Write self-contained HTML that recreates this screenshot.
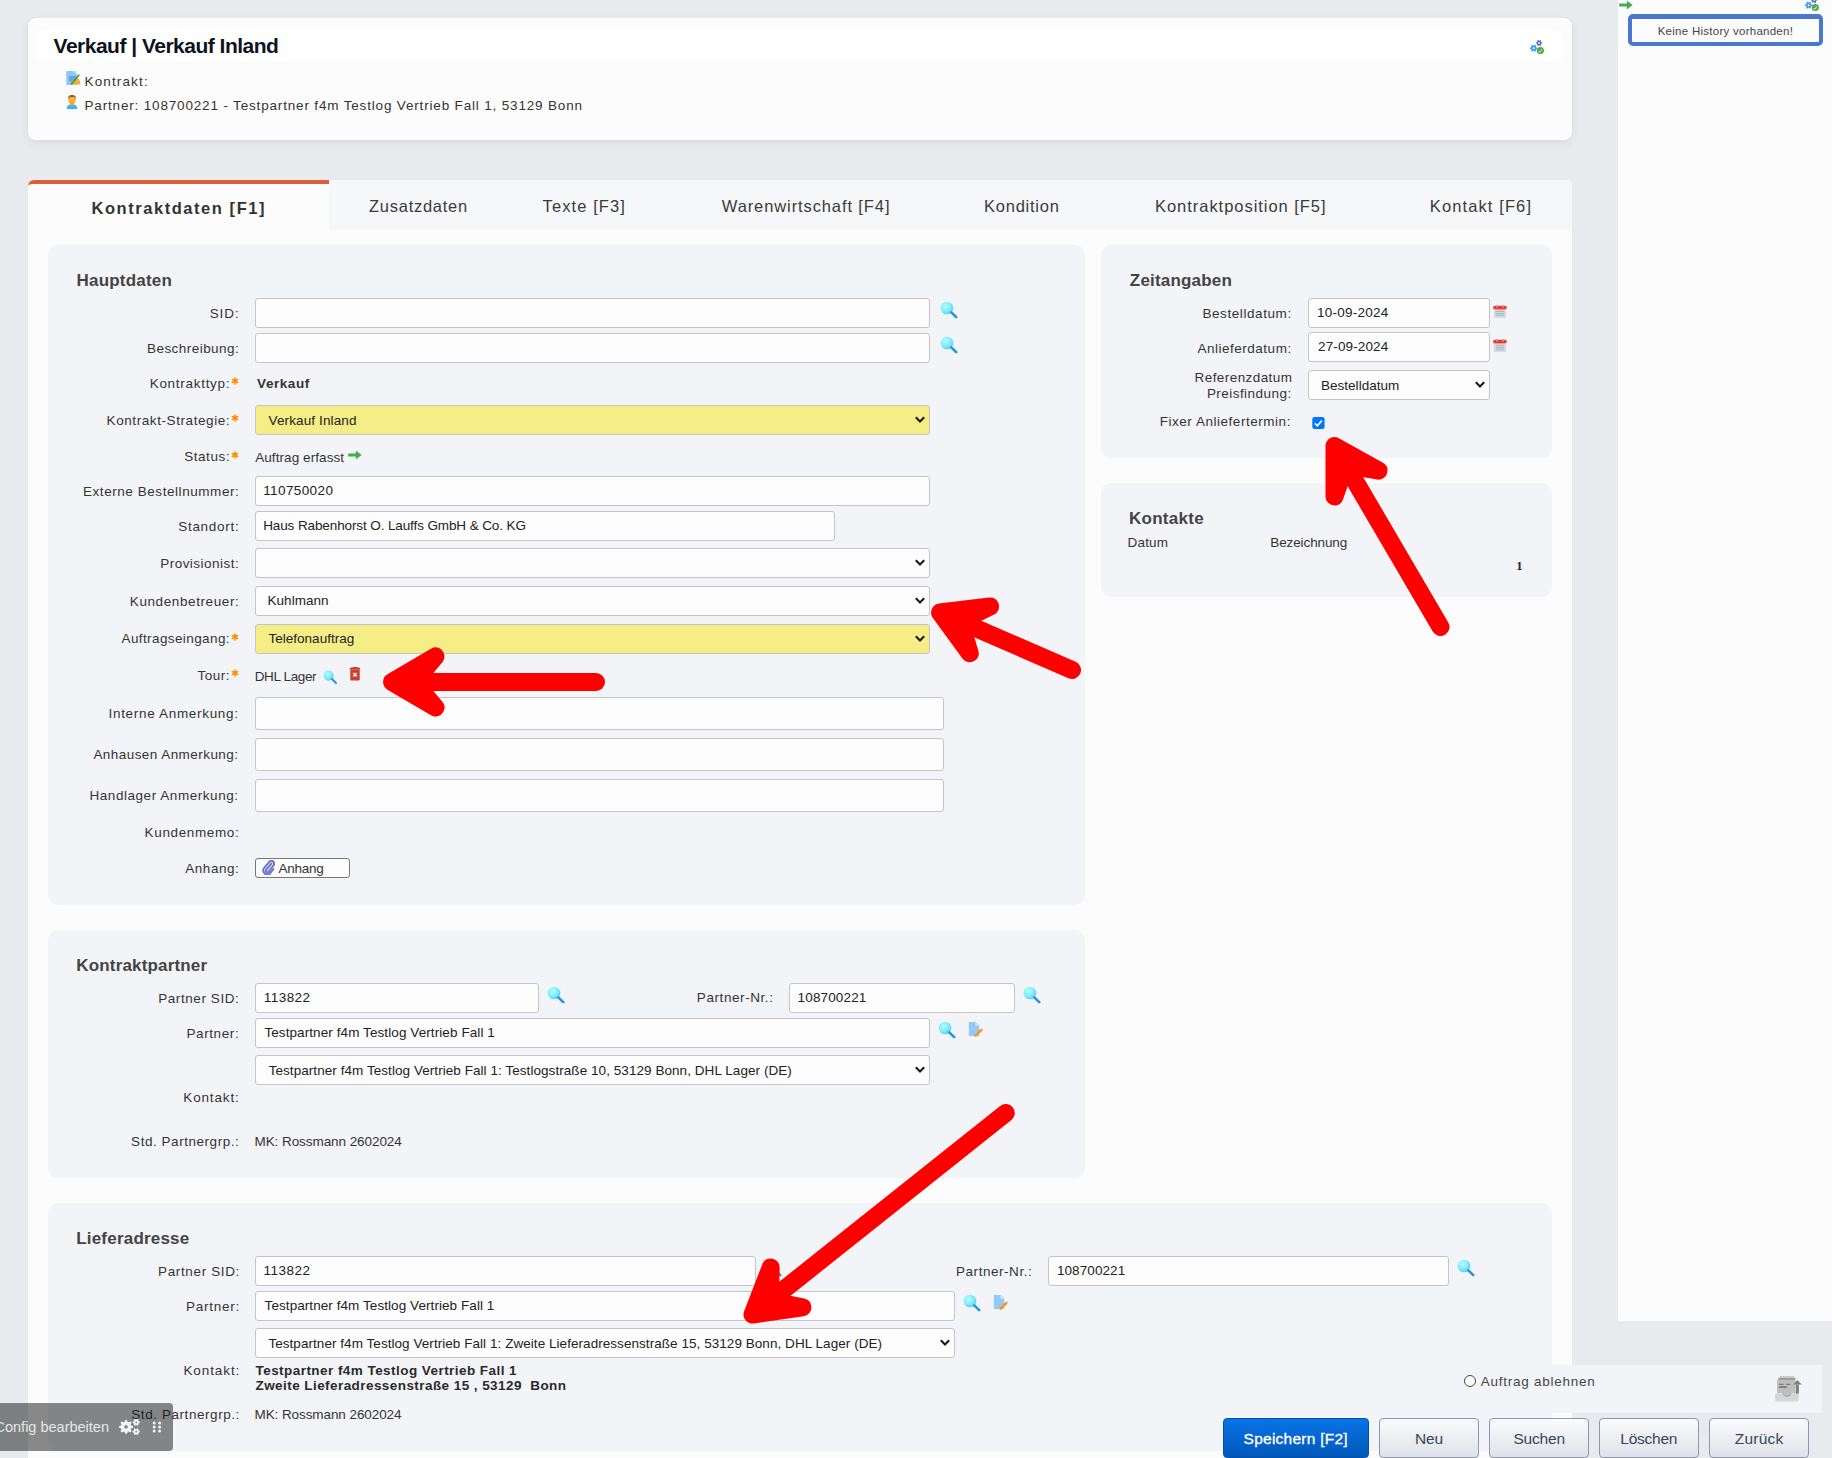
<!DOCTYPE html>
<html><head><meta charset="utf-8"><style>
html,body{margin:0;padding:0}
body{width:1832px;height:1458px;overflow:hidden;position:relative;background:#e9eaee;font-family:'Liberation Sans', sans-serif}
</style></head><body>
<svg width="0" height="0" style="position:absolute"><defs>
<radialGradient id="mg" cx="0.38" cy="0.35" r="0.7"><stop offset="0" stop-color="#b4ffff"/><stop offset="0.6" stop-color="#80eafc"/><stop offset="1" stop-color="#52cdf2"/></radialGradient>
</defs></svg>
<div style="position:absolute;left:1618px;top:0px;width:214px;height:1321px;background:#fcfcfd"></div>
<div style="position:absolute;left:28px;top:18px;width:1544px;height:122px;background:#fcfcfd;border-radius:8px;box-shadow:0 3px 8px rgba(0,0,0,0.07)"></div>
<div style="position:absolute;left:37px;top:30px;width:1525px;height:32px;background:#ffffff;border-radius:6px"></div>
<div style="position:absolute;left:28px;top:180px;width:1544px;height:1300px;background:#fcfcfd;border-radius:6px 5px 0 0"></div>
<div style="position:absolute;left:28px;top:180px;width:1544px;height:50px;background:#f6f7f9;border-radius:6px 5px 0 0"></div>
<div style="position:absolute;left:28px;top:180px;width:301px;height:50px;background:#fcfcfd;border-radius:6px 0 0 0;box-sizing:border-box;border-top:4px solid #d9603a"></div>
<div style="position:absolute;left:48px;top:245px;width:1037px;height:660px;background:#f3f4f8;border-radius:10px"></div>
<div style="position:absolute;left:1101px;top:245px;width:451px;height:213px;background:#f3f4f8;border-radius:10px"></div>
<div style="position:absolute;left:1101px;top:483px;width:451px;height:114px;background:#f3f4f8;border-radius:10px"></div>
<div style="position:absolute;left:48px;top:930px;width:1037px;height:248px;background:#f3f4f8;border-radius:10px"></div>
<div style="position:absolute;left:48px;top:1203px;width:1504px;height:248px;background:#f3f4f8;border-radius:10px"></div>
<div style="position:absolute;left:255px;top:298px;width:675px;height:30px;box-sizing:border-box;border:1px solid #c8c3c6;border-radius:3px;background:#fdfdfd"></div>
<div style="position:absolute;left:255px;top:333px;width:675px;height:30px;box-sizing:border-box;border:1px solid #c8c3c6;border-radius:3px;background:#fdfdfd"></div>
<div style="position:absolute;left:255px;top:405px;width:675px;height:30px;box-sizing:border-box;border:1px solid #c8c3c6;border-radius:3px;background:#f5ed85"></div>
<svg style="position:absolute;left:914px;top:415.0px" width="12" height="10" viewBox="0 0 12 10"><path d="M1.8 2.3 L6 6.5 L10.2 2.3" fill="none" stroke="#1a1a1a" stroke-width="2.1"/></svg>
<div style="position:absolute;left:255px;top:476px;width:675px;height:30px;box-sizing:border-box;border:1px solid #c8c3c6;border-radius:3px;background:#fdfdfd"></div>
<div style="position:absolute;left:255px;top:511px;width:580px;height:30px;box-sizing:border-box;border:1px solid #c8c3c6;border-radius:3px;background:#fdfdfd"></div>
<div style="position:absolute;left:255px;top:548px;width:675px;height:30px;box-sizing:border-box;border:1px solid #c8c3c6;border-radius:3px;background:#fdfdfd"></div>
<svg style="position:absolute;left:914px;top:558.0px" width="12" height="10" viewBox="0 0 12 10"><path d="M1.8 2.3 L6 6.5 L10.2 2.3" fill="none" stroke="#1a1a1a" stroke-width="2.1"/></svg>
<div style="position:absolute;left:255px;top:586px;width:675px;height:30px;box-sizing:border-box;border:1px solid #c8c3c6;border-radius:3px;background:#fdfdfd"></div>
<svg style="position:absolute;left:914px;top:596.0px" width="12" height="10" viewBox="0 0 12 10"><path d="M1.8 2.3 L6 6.5 L10.2 2.3" fill="none" stroke="#1a1a1a" stroke-width="2.1"/></svg>
<div style="position:absolute;left:255px;top:624px;width:675px;height:30px;box-sizing:border-box;border:1px solid #c8c3c6;border-radius:3px;background:#f5ed85"></div>
<svg style="position:absolute;left:914px;top:634.0px" width="12" height="10" viewBox="0 0 12 10"><path d="M1.8 2.3 L6 6.5 L10.2 2.3" fill="none" stroke="#1a1a1a" stroke-width="2.1"/></svg>
<div style="position:absolute;left:255px;top:697px;width:689px;height:33px;box-sizing:border-box;border:1px solid #c8c3c6;border-radius:3px;background:#fdfdfd"></div>
<div style="position:absolute;left:255px;top:738px;width:689px;height:33px;box-sizing:border-box;border:1px solid #c8c3c6;border-radius:3px;background:#fdfdfd"></div>
<div style="position:absolute;left:255px;top:779px;width:689px;height:33px;box-sizing:border-box;border:1px solid #c8c3c6;border-radius:3px;background:#fdfdfd"></div>
<div style="position:absolute;left:255px;top:858px;width:95px;height:20px;box-sizing:border-box;border:1px solid #777;border-radius:3px;background:#fdfdfd"></div>
<div style="position:absolute;left:1308px;top:298px;width:182px;height:30px;box-sizing:border-box;border:1px solid #c8c3c6;border-radius:3px;background:#fdfdfd"></div>
<div style="position:absolute;left:1308px;top:332px;width:182px;height:30px;box-sizing:border-box;border:1px solid #c8c3c6;border-radius:3px;background:#fdfdfd"></div>
<div style="position:absolute;left:1308px;top:370px;width:182px;height:30px;box-sizing:border-box;border:1px solid #c8c3c6;border-radius:3px;background:#fdfdfd"></div>
<svg style="position:absolute;left:1474px;top:380.0px" width="12" height="10" viewBox="0 0 12 10"><path d="M1.8 2.3 L6 6.5 L10.2 2.3" fill="none" stroke="#1a1a1a" stroke-width="2.1"/></svg>
<svg style="position:absolute;left:1312px;top:417px" width="13" height="12" viewBox="0 0 13 12"><rect x="0.3" y="0" width="12.3" height="12" rx="2.2" fill="#0075ff"/><path d="M2.9 6.4 L5.4 8.8 L9.9 3.5" fill="none" stroke="#fff" stroke-width="1.8"/></svg>
<div style="position:absolute;left:255px;top:983px;width:284px;height:30px;box-sizing:border-box;border:1px solid #c8c3c6;border-radius:3px;background:#fdfdfd"></div>
<div style="position:absolute;left:789px;top:983px;width:226px;height:30px;box-sizing:border-box;border:1px solid #c8c3c6;border-radius:3px;background:#fdfdfd"></div>
<div style="position:absolute;left:255px;top:1018px;width:675px;height:30px;box-sizing:border-box;border:1px solid #c8c3c6;border-radius:3px;background:#fdfdfd"></div>
<div style="position:absolute;left:255px;top:1055px;width:675px;height:30px;box-sizing:border-box;border:1px solid #c8c3c6;border-radius:3px;background:#fdfdfd"></div>
<svg style="position:absolute;left:914px;top:1065.0px" width="12" height="10" viewBox="0 0 12 10"><path d="M1.8 2.3 L6 6.5 L10.2 2.3" fill="none" stroke="#1a1a1a" stroke-width="2.1"/></svg>
<div style="position:absolute;left:255px;top:1256px;width:501px;height:30px;box-sizing:border-box;border:1px solid #c8c3c6;border-radius:3px;background:#fdfdfd"></div>
<div style="position:absolute;left:1048px;top:1256px;width:401px;height:30px;box-sizing:border-box;border:1px solid #c8c3c6;border-radius:3px;background:#fdfdfd"></div>
<div style="position:absolute;left:255px;top:1291px;width:700px;height:30px;box-sizing:border-box;border:1px solid #c8c3c6;border-radius:3px;background:#fdfdfd"></div>
<div style="position:absolute;left:255px;top:1328px;width:700px;height:30px;box-sizing:border-box;border:1px solid #c8c3c6;border-radius:3px;background:#fdfdfd"></div>
<svg style="position:absolute;left:939px;top:1338.0px" width="12" height="10" viewBox="0 0 12 10"><path d="M1.8 2.3 L6 6.5 L10.2 2.3" fill="none" stroke="#1a1a1a" stroke-width="2.1"/></svg>
<div style="position:absolute;left:1552px;top:1365px;width:270px;height:48px;background:#f3f4f8"></div>
<div style="position:absolute;left:1464px;top:1375px;width:12px;height:12px;box-sizing:border-box;border:1px solid #444;border-radius:50%;background:#fff"></div>
<div style="position:absolute;left:1628px;top:14px;width:195px;height:32px;box-sizing:border-box;border:4px solid #4a78cf;border-top-width:5px;border-radius:5px;background:#fcfcfd"></div>
<div style="position:absolute;left:1223px;top:1418px;width:146px;height:40px;box-sizing:border-box;border-radius:4px;background:linear-gradient(#0a74e6,#0058b9);border:1px solid #0052ad"></div>
<div style="position:absolute;left:1379px;top:1418px;width:100px;height:40px;box-sizing:border-box;border-radius:4px;background:linear-gradient(#fafbfc,#dfe2ea);border:1px solid #8e96a8"></div>
<div style="position:absolute;left:1489px;top:1418px;width:100px;height:40px;box-sizing:border-box;border-radius:4px;background:linear-gradient(#fafbfc,#dfe2ea);border:1px solid #8e96a8"></div>
<div style="position:absolute;left:1599px;top:1418px;width:100px;height:40px;box-sizing:border-box;border-radius:4px;background:linear-gradient(#fafbfc,#dfe2ea);border:1px solid #8e96a8"></div>
<div style="position:absolute;left:1709px;top:1418px;width:100px;height:40px;box-sizing:border-box;border-radius:4px;background:linear-gradient(#fafbfc,#dfe2ea);border:1px solid #8e96a8"></div>
<svg style="position:absolute;left:940px;top:301px;z-index:6" width="18.0" height="18.0" viewBox="0 0 18 18"><circle cx="7" cy="7" r="6.3" fill="url(#mg)"/><path d="M11.3 11.3 L16.2 16.2" stroke="#2199dc" stroke-width="2.6" stroke-linecap="round"/></svg>
<svg style="position:absolute;left:940px;top:336px;z-index:6" width="18.0" height="18.0" viewBox="0 0 18 18"><circle cx="7" cy="7" r="6.3" fill="url(#mg)"/><path d="M11.3 11.3 L16.2 16.2" stroke="#2199dc" stroke-width="2.6" stroke-linecap="round"/></svg>
<svg style="position:absolute;left:547px;top:986px;z-index:6" width="18.0" height="18.0" viewBox="0 0 18 18"><circle cx="7" cy="7" r="6.3" fill="url(#mg)"/><path d="M11.3 11.3 L16.2 16.2" stroke="#2199dc" stroke-width="2.6" stroke-linecap="round"/></svg>
<svg style="position:absolute;left:1023px;top:986px;z-index:6" width="18.0" height="18.0" viewBox="0 0 18 18"><circle cx="7" cy="7" r="6.3" fill="url(#mg)"/><path d="M11.3 11.3 L16.2 16.2" stroke="#2199dc" stroke-width="2.6" stroke-linecap="round"/></svg>
<svg style="position:absolute;left:938px;top:1021px;z-index:6" width="18.0" height="18.0" viewBox="0 0 18 18"><circle cx="7" cy="7" r="6.3" fill="url(#mg)"/><path d="M11.3 11.3 L16.2 16.2" stroke="#2199dc" stroke-width="2.6" stroke-linecap="round"/></svg>
<svg style="position:absolute;left:963px;top:1294px;z-index:6" width="18.0" height="18.0" viewBox="0 0 18 18"><circle cx="7" cy="7" r="6.3" fill="url(#mg)"/><path d="M11.3 11.3 L16.2 16.2" stroke="#2199dc" stroke-width="2.6" stroke-linecap="round"/></svg>
<svg style="position:absolute;left:1457px;top:1259px;z-index:6" width="18.0" height="18.0" viewBox="0 0 18 18"><circle cx="7" cy="7" r="6.3" fill="url(#mg)"/><path d="M11.3 11.3 L16.2 16.2" stroke="#2199dc" stroke-width="2.6" stroke-linecap="round"/></svg>
<svg style="position:absolute;left:763.5px;top:1258.5px;z-index:6" width="18.0" height="18.0" viewBox="0 0 18 18"><circle cx="7" cy="7" r="6.3" fill="url(#mg)"/><path d="M11.3 11.3 L16.2 16.2" stroke="#2199dc" stroke-width="2.6" stroke-linecap="round"/></svg>
<svg style="position:absolute;left:323px;top:669.5px;z-index:6" width="14.4" height="14.4" viewBox="0 0 18 18"><circle cx="7" cy="7" r="6.3" fill="url(#mg)"/><path d="M11.3 11.3 L16.2 16.2" stroke="#2199dc" stroke-width="2.6" stroke-linecap="round"/></svg>
<svg style="position:absolute;left:968px;top:1021px;z-index:6" width="16" height="17" viewBox="0 0 16 17"><path d="M0.8 1 H7.5 L11.1 4.6 V15 H0.8 Z" fill="#93c9f6"/><path d="M7.3 1.2 L10.9 4.8 H8.5 Q7.3 4.8 7.3 3.6 Z" fill="#d2ebfd"/><path d="M7.6 14.6 L13 9.3" stroke="#f59a10" stroke-width="2.6" stroke-linecap="round"/><circle cx="13.6" cy="8.7" r="1.1" fill="#e49aa0"/></svg>
<svg style="position:absolute;left:992.5px;top:1294px;z-index:6" width="16" height="17" viewBox="0 0 16 17"><path d="M0.8 1 H7.5 L11.1 4.6 V15 H0.8 Z" fill="#93c9f6"/><path d="M7.3 1.2 L10.9 4.8 H8.5 Q7.3 4.8 7.3 3.6 Z" fill="#d2ebfd"/><path d="M7.6 14.6 L13 9.3" stroke="#f59a10" stroke-width="2.6" stroke-linecap="round"/><circle cx="13.6" cy="8.7" r="1.1" fill="#e49aa0"/></svg>
<svg style="position:absolute;left:1493px;top:305px;z-index:6" width="15" height="14" viewBox="0 0 15 14"><rect x="0.8" y="5" width="12.2" height="8" rx="1.3" fill="#d2dae0"/><rect x="0.1" y="0.8" width="13.7" height="3.8" rx="1.8" fill="#f03a2a"/><rect x="3.3" y="0" width="1.5" height="2.6" fill="#b0a8b0"/><rect x="9.4" y="0" width="1.5" height="2.6" fill="#b0a8b0"/><path d="M3.1 6.4 H10.8 M3.1 8.5 H10.8 M3.1 10.4 H10.8" stroke="#a6b2ba" stroke-width="0.9"/></svg>
<svg style="position:absolute;left:1493px;top:339px;z-index:6" width="15" height="14" viewBox="0 0 15 14"><rect x="0.8" y="5" width="12.2" height="8" rx="1.3" fill="#d2dae0"/><rect x="0.1" y="0.8" width="13.7" height="3.8" rx="1.8" fill="#f03a2a"/><rect x="3.3" y="0" width="1.5" height="2.6" fill="#b0a8b0"/><rect x="9.4" y="0" width="1.5" height="2.6" fill="#b0a8b0"/><path d="M3.1 6.4 H10.8 M3.1 8.5 H10.8 M3.1 10.4 H10.8" stroke="#a6b2ba" stroke-width="0.9"/></svg>
<svg style="position:absolute;left:349px;top:666px;z-index:6" width="12" height="16" viewBox="0 0 12 16"><path d="M0.6 3.4 Q0.6 1.8 2.5 1.6 L4 1.3 Q6 0.3 8 1.3 L9.5 1.6 Q11.4 1.8 11.4 3.4 Z" fill="#b8402e"/><path d="M1.3 3.6 H10.7 V13.2 Q10.7 14.6 9.3 14.6 H2.7 Q1.3 14.6 1.3 13.2 Z" fill="#cf3b29"/><path d="M4.2 6.9 L7.8 10.5 M7.8 6.9 L4.2 10.5" stroke="#fff" stroke-width="1.3"/></svg>
<svg style="position:absolute;left:230.6px;top:377.3px;z-index:6" width="8" height="8" viewBox="0 0 8 8"><path d="M4.00 7.00 L4.00 1.00 M6.60 5.50 L1.40 2.50 M1.40 5.50 L6.60 2.50 " stroke="#ff8f00" stroke-width="1.6" stroke-linecap="round"/></svg>
<svg style="position:absolute;left:230.6px;top:414.1px;z-index:6" width="8" height="8" viewBox="0 0 8 8"><path d="M4.00 7.00 L4.00 1.00 M6.60 5.50 L1.40 2.50 M1.40 5.50 L6.60 2.50 " stroke="#ff8f00" stroke-width="1.6" stroke-linecap="round"/></svg>
<svg style="position:absolute;left:230.6px;top:450.5px;z-index:6" width="8" height="8" viewBox="0 0 8 8"><path d="M4.00 7.00 L4.00 1.00 M6.60 5.50 L1.40 2.50 M1.40 5.50 L6.60 2.50 " stroke="#ff8f00" stroke-width="1.6" stroke-linecap="round"/></svg>
<svg style="position:absolute;left:230.6px;top:632.8px;z-index:6" width="8" height="8" viewBox="0 0 8 8"><path d="M4.00 7.00 L4.00 1.00 M6.60 5.50 L1.40 2.50 M1.40 5.50 L6.60 2.50 " stroke="#ff8f00" stroke-width="1.6" stroke-linecap="round"/></svg>
<svg style="position:absolute;left:230.6px;top:669.1px;z-index:6" width="8" height="8" viewBox="0 0 8 8"><path d="M4.00 7.00 L4.00 1.00 M6.60 5.50 L1.40 2.50 M1.40 5.50 L6.60 2.50 " stroke="#ff8f00" stroke-width="1.6" stroke-linecap="round"/></svg>
<svg style="position:absolute;left:348px;top:450px;z-index:6" width="15" height="10" viewBox="0 0 15 10"><path d="M0.2 5 H9" stroke="#46a94b" stroke-width="3"/><path d="M7.8 0.6 L13.6 5 L7.8 9.4 Z" fill="#46a94b"/></svg>
<svg style="position:absolute;left:1619px;top:0px;z-index:6" width="15" height="10" viewBox="0 0 15 10"><path d="M0.2 5 H9" stroke="#46a94b" stroke-width="3"/><path d="M7.8 0.6 L13.6 5 L7.8 9.4 Z" fill="#46a94b"/></svg>
<svg style="position:absolute;left:262px;top:860px;z-index:6" width="13" height="15" viewBox="0 0 13 15"><path d="M9.5 3.5 L4 10 a1.6 1.6 0 0 0 2.4 2 L11.5 5.5 a2.8 2.8 0 0 0 -4.2 -3.7 L2 8.2 a4 4 0 0 0 6 5.2 L11.5 9" fill="none" stroke="#6876cc" stroke-width="2" stroke-linecap="round"/></svg>
<svg style="position:absolute;left:66px;top:70px;z-index:6" width="16" height="16" viewBox="0 0 16 16"><rect x="0.3" y="1" width="10.5" height="14" fill="#8fc6f6"/><path d="M7 1 H10.8 V4.5 Z" fill="#c5e2fb"/><rect x="3" y="6" width="7.5" height="5.5" fill="#5ea6ea"/><path d="M5 14.5 C5 10.5 8 8.5 10.5 8 C13 8 14.3 10.5 14.3 14.5 Z" fill="#f7a944"/><path d="M12.8 5.2 L5.5 13.7" stroke="#3e9a3a" stroke-width="1.7" stroke-linecap="round"/></svg>
<svg style="position:absolute;left:66px;top:94px;z-index:6" width="12" height="16" viewBox="0 0 12 16"><path d="M6 10.5 C3.2 10.5 2.2 8 2.2 5 C2.2 2 3.8 1 6 1 C8.2 1 9.8 2 9.8 5 C9.8 8 8.8 10.5 6 10.5 Z" fill="#f9ae4a"/><path d="M2 5.2 C1.8 2 3.6 0.9 6 0.9 C8.4 0.9 10.2 2 10 5.2 C9.3 3.3 8 3.1 6 3.1 C4 3.1 2.7 3.3 2 5.2 Z" fill="#9c5c22"/><path d="M0.6 15 C0.8 11.8 2.5 10.4 4.6 10.4 L6 11.6 L7.4 10.4 C9.5 10.4 11.2 11.8 11.4 15 Z" fill="#3db2f2"/><circle cx="6" cy="10.3" r="1.3" fill="#ff9a00"/></svg>
<svg style="position:absolute;left:1529px;top:40px;z-index:6" width="16" height="16" viewBox="0 0 16 16"><path d="M7.00 7.21 L8.25 7.62 L8.25 8.78 L7.00 9.19 L6.66 9.78 L6.93 11.08 L5.93 11.65 L4.94 10.78 L4.26 10.78 L3.27 11.65 L2.27 11.08 L2.54 9.78 L2.20 9.19 L0.95 8.78 L0.95 7.62 L2.20 7.21 L2.54 6.62 L2.27 5.32 L3.27 4.75 L4.26 5.62 L4.94 5.62 L5.93 4.75 L6.93 5.32 L6.66 6.62 Z M5.60 8.20 A1.0 1.0 0 1 0 3.60 8.20 A1.0 1.0 0 1 0 5.60 8.20 Z" fill="#3a9af0" fill-rule="evenodd"/><path d="M12.13 2.16 L13.16 2.52 L13.16 3.48 L12.13 3.84 L11.85 4.34 L12.05 5.41 L11.21 5.89 L10.39 5.18 L9.81 5.18 L8.99 5.89 L8.15 5.41 L8.35 4.34 L8.07 3.84 L7.04 3.48 L7.04 2.52 L8.07 2.16 L8.35 1.66 L8.15 0.59 L8.99 0.11 L9.81 0.82 L10.39 0.82 L11.21 0.11 L12.05 0.59 L11.85 1.66 Z M11.00 3.00 A0.9 0.9 0 1 0 9.20 3.00 A0.9 0.9 0 1 0 11.00 3.00 Z" fill="#5560c8" fill-rule="evenodd"/><circle cx="11.3" cy="10.5" r="3.6" fill="#4aa853"/><path d="M9.6 11.2 L10.8 12.2 L12.9 9.4" fill="none" stroke="#b8e0b8" stroke-width="1.1"/></svg>
<svg style="position:absolute;left:1804px;top:-3px;z-index:6" width="16" height="16" viewBox="0 0 16 16"><path d="M7.00 7.21 L8.25 7.62 L8.25 8.78 L7.00 9.19 L6.66 9.78 L6.93 11.08 L5.93 11.65 L4.94 10.78 L4.26 10.78 L3.27 11.65 L2.27 11.08 L2.54 9.78 L2.20 9.19 L0.95 8.78 L0.95 7.62 L2.20 7.21 L2.54 6.62 L2.27 5.32 L3.27 4.75 L4.26 5.62 L4.94 5.62 L5.93 4.75 L6.93 5.32 L6.66 6.62 Z M5.60 8.20 A1.0 1.0 0 1 0 3.60 8.20 A1.0 1.0 0 1 0 5.60 8.20 Z" fill="#3a9af0" fill-rule="evenodd"/><path d="M12.13 2.16 L13.16 2.52 L13.16 3.48 L12.13 3.84 L11.85 4.34 L12.05 5.41 L11.21 5.89 L10.39 5.18 L9.81 5.18 L8.99 5.89 L8.15 5.41 L8.35 4.34 L8.07 3.84 L7.04 3.48 L7.04 2.52 L8.07 2.16 L8.35 1.66 L8.15 0.59 L8.99 0.11 L9.81 0.82 L10.39 0.82 L11.21 0.11 L12.05 0.59 L11.85 1.66 Z M11.00 3.00 A0.9 0.9 0 1 0 9.20 3.00 A0.9 0.9 0 1 0 11.00 3.00 Z" fill="#5560c8" fill-rule="evenodd"/><circle cx="11.3" cy="10.5" r="3.6" fill="#4aa853"/><path d="M9.6 11.2 L10.8 12.2 L12.9 9.4" fill="none" stroke="#b8e0b8" stroke-width="1.1"/></svg>
<svg style="position:absolute;left:1775px;top:1375px;z-index:6" width="28" height="28" viewBox="0 0 28 28"><rect x="5" y="1.1" width="13.8" height="1.6" fill="#c8c8c8"/><rect x="3.3" y="2.8" width="17.2" height="2.2" rx="0.8" fill="#9a9a9a"/><rect x="2.1" y="4.8" width="18.4" height="13.4" fill="#bebebe"/><rect x="4.1" y="8.7" width="4.6" height="1.3" fill="#787878"/><rect x="11.2" y="8.7" width="3.9" height="1.3" fill="#787878"/><rect x="4.1" y="11.2" width="7.8" height="1.7" fill="#787878"/><rect x="0.1" y="18.3" width="23.6" height="8.3" rx="2" fill="#d6d6d6"/><path d="M8.1 17.6 A3.9 3.9 0 0 0 15.9 17.6" fill="#bebebe" stroke="#a8a8a8" stroke-width="1"/><rect x="20.8" y="9.4" width="3.1" height="9.3" fill="#808080"/><path d="M22.3 5 L26.9 9.6 L18.1 9.6 Z" fill="#808080"/></svg>
<svg style="position:absolute;left:118px;top:1418px;z-index:21" width="24" height="20" viewBox="0 0 24 20"><path d="M13.03 7.39 L15.00 8.08 L15.00 9.72 L13.03 10.41 L12.64 11.35 L13.55 13.23 L12.38 14.40 L10.50 13.49 L9.56 13.88 L8.87 15.85 L7.23 15.85 L6.54 13.88 L5.60 13.49 L3.72 14.40 L2.55 13.23 L3.46 11.35 L3.07 10.41 L1.10 9.72 L1.10 8.08 L3.07 7.39 L3.46 6.45 L2.55 4.57 L3.72 3.40 L5.60 4.31 L6.54 3.92 L7.23 1.95 L8.87 1.95 L9.56 3.92 L10.50 4.31 L12.38 3.40 L13.55 4.57 L12.64 6.45 Z M9.85 8.90 A1.8 1.8 0 1 0 6.25 8.90 A1.8 1.8 0 1 0 9.85 8.90 Z" fill="#f4f4f6" fill-rule="evenodd"/><path d="M20.69 3.27 L21.85 3.72 L21.85 4.88 L20.69 5.33 L20.34 5.94 L20.53 7.18 L19.53 7.75 L18.55 6.98 L17.85 6.98 L16.87 7.75 L15.87 7.18 L16.06 5.94 L15.71 5.33 L14.55 4.88 L14.55 3.72 L15.71 3.27 L16.06 2.66 L15.87 1.42 L16.87 0.85 L17.85 1.62 L18.55 1.62 L19.53 0.85 L20.53 1.42 L20.34 2.66 Z M19.10 4.30 A0.9 0.9 0 1 0 17.30 4.30 A0.9 0.9 0 1 0 19.10 4.30 Z" fill="#f4f4f6" fill-rule="evenodd"/><path d="M20.69 12.57 L21.85 13.02 L21.85 14.18 L20.69 14.63 L20.34 15.24 L20.53 16.48 L19.53 17.05 L18.55 16.28 L17.85 16.28 L16.87 17.05 L15.87 16.48 L16.06 15.24 L15.71 14.63 L14.55 14.18 L14.55 13.02 L15.71 12.57 L16.06 11.96 L15.87 10.72 L16.87 10.15 L17.85 10.92 L18.55 10.92 L19.53 10.15 L20.53 10.72 L20.34 11.96 Z M19.10 13.60 A0.9 0.9 0 1 0 17.30 13.60 A0.9 0.9 0 1 0 19.10 13.60 Z" fill="#f4f4f6" fill-rule="evenodd"/></svg>
<svg style="position:absolute;left:152px;top:1421px;z-index:21" width="10" height="12" viewBox="0 0 10 12"><g fill="#f4f4f6"><circle cx="2.2" cy="1.9" r="1.5"/><circle cx="7.6" cy="1.9" r="1.5"/><circle cx="2.2" cy="6" r="1.5"/><circle cx="7.6" cy="6" r="1.5"/><circle cx="2.2" cy="10" r="1.5"/><circle cx="7.6" cy="10" r="1.5"/></g></svg>
<div style="position:absolute;left:53.60px;top:36.06px;font:bold 21px/20px 'Liberation Sans', sans-serif;color:#0d1321;letter-spacing:-0.510px;white-space:pre;z-index:5;">Verkauf | Verkauf Inland</div>
<div style="position:absolute;left:84.50px;top:71.74px;font:13.5px/20px 'Liberation Sans', sans-serif;color:#333;letter-spacing:1.141px;white-space:pre;z-index:5;">Kontrakt:</div>
<div style="position:absolute;left:84.50px;top:95.54px;font:13.5px/20px 'Liberation Sans', sans-serif;color:#333;letter-spacing:0.831px;white-space:pre;z-index:5;">Partner: 108700221 - Testpartner f4m Testlog Vertrieb Fall 1, 53129 Bonn</div>
<div style="position:absolute;left:91.50px;top:198.45px;font:bold 16.5px/20px 'Liberation Sans', sans-serif;color:#333;letter-spacing:1.548px;white-space:pre;z-index:5;">Kontraktdaten [F1]</div>
<div style="position:absolute;left:369.00px;top:196.35px;font:16.5px/20px 'Liberation Sans', sans-serif;color:#3a3a3a;letter-spacing:0.737px;white-space:pre;z-index:5;">Zusatzdaten</div>
<div style="position:absolute;left:542.60px;top:196.35px;font:16.5px/20px 'Liberation Sans', sans-serif;color:#3a3a3a;letter-spacing:1.093px;white-space:pre;z-index:5;">Texte [F3]</div>
<div style="position:absolute;left:721.80px;top:196.35px;font:16.5px/20px 'Liberation Sans', sans-serif;color:#3a3a3a;letter-spacing:0.895px;white-space:pre;z-index:5;">Warenwirtschaft [F4]</div>
<div style="position:absolute;left:984.00px;top:196.35px;font:16.5px/20px 'Liberation Sans', sans-serif;color:#3a3a3a;letter-spacing:0.759px;white-space:pre;z-index:5;">Kondition</div>
<div style="position:absolute;left:1155.00px;top:196.35px;font:16.5px/20px 'Liberation Sans', sans-serif;color:#3a3a3a;letter-spacing:0.963px;white-space:pre;z-index:5;">Kontraktposition [F5]</div>
<div style="position:absolute;left:1429.80px;top:196.35px;font:16.5px/20px 'Liberation Sans', sans-serif;color:#3a3a3a;letter-spacing:1.111px;white-space:pre;z-index:5;">Kontakt [F6]</div>
<div style="position:absolute;left:76.50px;top:270.58px;font:bold 17px/20px 'Liberation Sans', sans-serif;color:#444;letter-spacing:0.198px;white-space:pre;z-index:5;">Hauptdaten</div>
<div style="position:absolute;left:1129.80px;top:270.78px;font:bold 17px/20px 'Liberation Sans', sans-serif;color:#444;letter-spacing:0.196px;white-space:pre;z-index:5;">Zeitangaben</div>
<div style="position:absolute;left:1129.00px;top:509.18px;font:bold 17px/20px 'Liberation Sans', sans-serif;color:#444;letter-spacing:0.275px;white-space:pre;z-index:5;">Kontakte</div>
<div style="position:absolute;left:76.30px;top:956.38px;font:bold 17px/20px 'Liberation Sans', sans-serif;color:#444;letter-spacing:0.168px;white-space:pre;z-index:5;">Kontraktpartner</div>
<div style="position:absolute;left:76.20px;top:1229.38px;font:bold 17px/20px 'Liberation Sans', sans-serif;color:#444;letter-spacing:0.207px;white-space:pre;z-index:5;">Lieferadresse</div>
<div style="position:absolute;left:209.70px;top:303.54px;font:13.5px/20px 'Liberation Sans', sans-serif;color:#333;letter-spacing:0.932px;white-space:pre;z-index:5;">SID:</div>
<div style="position:absolute;left:147.00px;top:338.54px;font:13.5px/20px 'Liberation Sans', sans-serif;color:#333;letter-spacing:0.454px;white-space:pre;z-index:5;">Beschreibung:</div>
<div style="position:absolute;left:149.70px;top:373.74px;font:13.5px/20px 'Liberation Sans', sans-serif;color:#333;letter-spacing:0.711px;white-space:pre;z-index:5;">Kontrakttyp:</div>
<div style="position:absolute;left:106.60px;top:410.54px;font:13.5px/20px 'Liberation Sans', sans-serif;color:#333;letter-spacing:0.578px;white-space:pre;z-index:5;">Kontrakt-Strategie:</div>
<div style="position:absolute;left:184.20px;top:446.94px;font:13.5px/20px 'Liberation Sans', sans-serif;color:#333;letter-spacing:0.555px;white-space:pre;z-index:5;">Status:</div>
<div style="position:absolute;left:83.00px;top:481.54px;font:13.5px/20px 'Liberation Sans', sans-serif;color:#333;letter-spacing:0.557px;white-space:pre;z-index:5;">Externe Bestellnummer:</div>
<div style="position:absolute;left:178.20px;top:516.54px;font:13.5px/20px 'Liberation Sans', sans-serif;color:#333;letter-spacing:0.721px;white-space:pre;z-index:5;">Standort:</div>
<div style="position:absolute;left:160.20px;top:553.54px;font:13.5px/20px 'Liberation Sans', sans-serif;color:#333;letter-spacing:0.481px;white-space:pre;z-index:5;">Provisionist:</div>
<div style="position:absolute;left:129.80px;top:591.74px;font:13.5px/20px 'Liberation Sans', sans-serif;color:#333;letter-spacing:0.598px;white-space:pre;z-index:5;">Kundenbetreuer:</div>
<div style="position:absolute;left:121.50px;top:629.24px;font:13.5px/20px 'Liberation Sans', sans-serif;color:#333;letter-spacing:0.398px;white-space:pre;z-index:5;">Auftragseingang:</div>
<div style="position:absolute;left:197.50px;top:665.54px;font:13.5px/20px 'Liberation Sans', sans-serif;color:#333;letter-spacing:0.510px;white-space:pre;z-index:5;">Tour:</div>
<div style="position:absolute;left:108.50px;top:703.54px;font:13.5px/20px 'Liberation Sans', sans-serif;color:#333;letter-spacing:0.687px;white-space:pre;z-index:5;">Interne Anmerkung:</div>
<div style="position:absolute;left:93.40px;top:744.54px;font:13.5px/20px 'Liberation Sans', sans-serif;color:#333;letter-spacing:0.445px;white-space:pre;z-index:5;">Anhausen Anmerkung:</div>
<div style="position:absolute;left:89.50px;top:785.54px;font:13.5px/20px 'Liberation Sans', sans-serif;color:#333;letter-spacing:0.548px;white-space:pre;z-index:5;">Handlager Anmerkung:</div>
<div style="position:absolute;left:144.60px;top:823.14px;font:13.5px/20px 'Liberation Sans', sans-serif;color:#333;letter-spacing:0.635px;white-space:pre;z-index:5;">Kundenmemo:</div>
<div style="position:absolute;left:185.30px;top:858.54px;font:13.5px/20px 'Liberation Sans', sans-serif;color:#333;letter-spacing:0.526px;white-space:pre;z-index:5;">Anhang:</div>
<div style="position:absolute;left:257.10px;top:373.74px;font:bold 13.5px/20px 'Liberation Sans', sans-serif;color:#333;letter-spacing:0.553px;white-space:pre;z-index:5;">Verkauf</div>
<div style="position:absolute;left:268.50px;top:410.54px;font:13.5px/20px 'Liberation Sans', sans-serif;color:#222;letter-spacing:0.123px;white-space:pre;z-index:5;">Verkauf Inland</div>
<div style="position:absolute;left:255.20px;top:448.34px;font:13.5px/20px 'Liberation Sans', sans-serif;color:#333;letter-spacing:0.076px;white-space:pre;z-index:5;">Auftrag erfasst</div>
<div style="position:absolute;left:263.20px;top:480.54px;font:13.5px/20px 'Liberation Sans', sans-serif;color:#222;letter-spacing:0.392px;white-space:pre;z-index:5;">110750020</div>
<div style="position:absolute;left:263.20px;top:515.74px;font:13.5px/20px 'Liberation Sans', sans-serif;color:#222;letter-spacing:-0.110px;white-space:pre;z-index:5;">Haus Rabenhorst O. Lauffs GmbH &amp; Co. KG</div>
<div style="position:absolute;left:267.50px;top:591.24px;font:13.5px/20px 'Liberation Sans', sans-serif;color:#222;letter-spacing:0.046px;white-space:pre;z-index:5;">Kuhlmann</div>
<div style="position:absolute;left:268.50px;top:629.24px;font:13.5px/20px 'Liberation Sans', sans-serif;color:#222;letter-spacing:0.011px;white-space:pre;z-index:5;">Telefonauftrag</div>
<div style="position:absolute;left:254.70px;top:667.04px;font:13.5px/20px 'Liberation Sans', sans-serif;color:#333;letter-spacing:-0.361px;white-space:pre;z-index:5;">DHL Lager</div>
<div style="position:absolute;left:278.40px;top:858.54px;font:13.5px/20px 'Liberation Sans', sans-serif;color:#333;letter-spacing:-0.227px;white-space:pre;z-index:5;">Anhang</div>
<div style="position:absolute;left:1202.40px;top:303.54px;font:13.5px/20px 'Liberation Sans', sans-serif;color:#333;letter-spacing:0.580px;white-space:pre;z-index:5;">Bestelldatum:</div>
<div style="position:absolute;left:1317.00px;top:302.84px;font:13.5px/20px 'Liberation Sans', sans-serif;color:#222;letter-spacing:0.239px;white-space:pre;z-index:5;">10-09-2024</div>
<div style="position:absolute;left:1197.40px;top:338.74px;font:13.5px/20px 'Liberation Sans', sans-serif;color:#333;letter-spacing:0.516px;white-space:pre;z-index:5;">Anlieferdatum:</div>
<div style="position:absolute;left:1318.00px;top:336.84px;font:13.5px/20px 'Liberation Sans', sans-serif;color:#222;letter-spacing:0.128px;white-space:pre;z-index:5;">27-09-2024</div>
<div style="position:absolute;left:1194.60px;top:367.84px;font:13.5px/20px 'Liberation Sans', sans-serif;color:#333;letter-spacing:0.421px;white-space:pre;z-index:5;">Referenzdatum</div>
<div style="position:absolute;left:1206.90px;top:383.54px;font:13.5px/20px 'Liberation Sans', sans-serif;color:#333;letter-spacing:0.454px;white-space:pre;z-index:5;">Preisfindung:</div>
<div style="position:absolute;left:1320.90px;top:375.54px;font:13.5px/20px 'Liberation Sans', sans-serif;color:#222;letter-spacing:0.037px;white-space:pre;z-index:5;">Bestelldatum</div>
<div style="position:absolute;left:1159.70px;top:411.84px;font:13.5px/20px 'Liberation Sans', sans-serif;color:#333;letter-spacing:0.533px;white-space:pre;z-index:5;">Fixer Anliefertermin:</div>
<div style="position:absolute;left:1127.50px;top:532.54px;font:13.5px/20px 'Liberation Sans', sans-serif;color:#333;letter-spacing:0.196px;white-space:pre;z-index:5;">Datum</div>
<div style="position:absolute;left:1270.30px;top:532.54px;font:13.5px/20px 'Liberation Sans', sans-serif;color:#333;letter-spacing:-0.115px;white-space:pre;z-index:5;">Bezeichnung</div>
<div style="position:absolute;left:1516.20px;top:555.67px;font:bold 12.5px/20px 'Liberation Sans', sans-serif;color:#222;letter-spacing:0.000px;white-space:pre;z-index:5;font-family:'Liberation Serif',serif;">1</div>
<div style="position:absolute;left:158.20px;top:989.04px;font:13.5px/20px 'Liberation Sans', sans-serif;color:#333;letter-spacing:0.579px;white-space:pre;z-index:5;">Partner SID:</div>
<div style="position:absolute;left:263.70px;top:988.04px;font:13.5px/20px 'Liberation Sans', sans-serif;color:#222;letter-spacing:0.472px;white-space:pre;z-index:5;">113822</div>
<div style="position:absolute;left:696.80px;top:988.14px;font:13.5px/20px 'Liberation Sans', sans-serif;color:#333;letter-spacing:0.580px;white-space:pre;z-index:5;">Partner-Nr.:</div>
<div style="position:absolute;left:797.60px;top:988.04px;font:13.5px/20px 'Liberation Sans', sans-serif;color:#222;letter-spacing:0.142px;white-space:pre;z-index:5;">108700221</div>
<div style="position:absolute;left:186.40px;top:1024.14px;font:13.5px/20px 'Liberation Sans', sans-serif;color:#333;letter-spacing:0.618px;white-space:pre;z-index:5;">Partner:</div>
<div style="position:absolute;left:264.40px;top:1023.24px;font:13.5px/20px 'Liberation Sans', sans-serif;color:#222;letter-spacing:0.088px;white-space:pre;z-index:5;">Testpartner f4m Testlog Vertrieb Fall 1</div>
<div style="position:absolute;left:268.70px;top:1060.84px;font:13.5px/20px 'Liberation Sans', sans-serif;color:#222;letter-spacing:0.058px;white-space:pre;z-index:5;">Testpartner f4m Testlog Vertrieb Fall 1: Testlogstraße 10, 53129 Bonn, DHL Lager (DE)</div>
<div style="position:absolute;left:183.30px;top:1088.04px;font:13.5px/20px 'Liberation Sans', sans-serif;color:#333;letter-spacing:0.846px;white-space:pre;z-index:5;">Kontakt:</div>
<div style="position:absolute;left:131.10px;top:1131.74px;font:13.5px/20px 'Liberation Sans', sans-serif;color:#333;letter-spacing:0.538px;white-space:pre;z-index:5;">Std. Partnergrp.:</div>
<div style="position:absolute;left:254.50px;top:1131.54px;font:13.5px/20px 'Liberation Sans', sans-serif;color:#333;letter-spacing:-0.067px;white-space:pre;z-index:5;">MK: Rossmann 2602024</div>
<div style="position:absolute;left:158.00px;top:1261.84px;font:13.5px/20px 'Liberation Sans', sans-serif;color:#333;letter-spacing:0.643px;white-space:pre;z-index:5;">Partner SID:</div>
<div style="position:absolute;left:263.60px;top:1260.84px;font:13.5px/20px 'Liberation Sans', sans-serif;color:#222;letter-spacing:0.492px;white-space:pre;z-index:5;">113822</div>
<div style="position:absolute;left:956.00px;top:1262.14px;font:13.5px/20px 'Liberation Sans', sans-serif;color:#333;letter-spacing:0.544px;white-space:pre;z-index:5;">Partner-Nr.:</div>
<div style="position:absolute;left:1056.90px;top:1260.54px;font:13.5px/20px 'Liberation Sans', sans-serif;color:#222;letter-spacing:0.092px;white-space:pre;z-index:5;">108700221</div>
<div style="position:absolute;left:186.10px;top:1296.64px;font:13.5px/20px 'Liberation Sans', sans-serif;color:#333;letter-spacing:0.747px;white-space:pre;z-index:5;">Partner:</div>
<div style="position:absolute;left:264.60px;top:1295.64px;font:13.5px/20px 'Liberation Sans', sans-serif;color:#222;letter-spacing:0.070px;white-space:pre;z-index:5;">Testpartner f4m Testlog Vertrieb Fall 1</div>
<div style="position:absolute;left:268.40px;top:1333.54px;font:13.5px/20px 'Liberation Sans', sans-serif;color:#222;letter-spacing:0.052px;white-space:pre;z-index:5;">Testpartner f4m Testlog Vertrieb Fall 1: Zweite Lieferadressenstraße 15, 53129 Bonn, DHL Lager (DE)</div>
<div style="position:absolute;left:183.40px;top:1360.94px;font:13.5px/20px 'Liberation Sans', sans-serif;color:#333;letter-spacing:0.917px;white-space:pre;z-index:5;">Kontakt:</div>
<div style="position:absolute;left:255.50px;top:1360.64px;font:bold 13.5px/20px 'Liberation Sans', sans-serif;color:#2a2a2a;letter-spacing:0.448px;white-space:pre;z-index:5;">Testpartner f4m Testlog Vertrieb Fall 1</div>
<div style="position:absolute;left:255.50px;top:1375.84px;font:bold 13.5px/20px 'Liberation Sans', sans-serif;color:#2a2a2a;letter-spacing:0.434px;white-space:pre;z-index:5;">Zweite Lieferadressenstraße 15 , 53129  Bonn</div>
<div style="position:absolute;left:131.30px;top:1404.94px;font:13.5px/20px 'Liberation Sans', sans-serif;color:#333;letter-spacing:0.563px;white-space:pre;z-index:5;">Std. Partnergrp.:</div>
<div style="position:absolute;left:254.50px;top:1404.54px;font:13.5px/20px 'Liberation Sans', sans-serif;color:#333;letter-spacing:-0.083px;white-space:pre;z-index:5;">MK: Rossmann 2602024</div>
<div style="position:absolute;left:1657.70px;top:21.00px;font:11.5px/20px 'Liberation Sans', sans-serif;color:#444;letter-spacing:0.264px;white-space:pre;z-index:5;">Keine History vorhanden!</div>
<div style="position:absolute;left:1480.80px;top:1371.54px;font:13.5px/20px 'Liberation Sans', sans-serif;color:#454545;letter-spacing:0.745px;white-space:pre;z-index:5;">Auftrag ablehnen</div>
<div style="position:absolute;left:1243.60px;top:1428.88px;font:15.5px/20px 'Liberation Sans', sans-serif;color:#ffffff;letter-spacing:0.246px;white-space:pre;z-index:5;-webkit-text-stroke:0.3px #fff;">Speichern [F2]</div>
<div style="position:absolute;left:1415.00px;top:1428.88px;font:15.5px/20px 'Liberation Sans', sans-serif;color:#3b4457;letter-spacing:-0.157px;white-space:pre;z-index:5;">Neu</div>
<div style="position:absolute;left:1513.40px;top:1428.88px;font:15.5px/20px 'Liberation Sans', sans-serif;color:#3b4457;letter-spacing:-0.170px;white-space:pre;z-index:5;">Suchen</div>
<div style="position:absolute;left:1620.30px;top:1428.88px;font:15.5px/20px 'Liberation Sans', sans-serif;color:#3b4457;letter-spacing:-0.247px;white-space:pre;z-index:5;">Löschen</div>
<div style="position:absolute;left:1734.80px;top:1428.88px;font:15.5px/20px 'Liberation Sans', sans-serif;color:#3b4457;letter-spacing:0.196px;white-space:pre;z-index:5;">Zurück</div>
<div style="position:absolute;left:-5.51px;top:1417.21px;font:14.5px/20px 'Liberation Sans', sans-serif;color:#e6e6e6;letter-spacing:0.000px;white-space:pre;z-index:21;">Config bearbeiten</div>
<div style="position:absolute;left:-10px;top:1403px;width:183px;height:48px;background:rgba(20,20,20,0.5);border-radius:4px;z-index:20"></div>
<svg style="position:absolute;left:0;top:0;z-index:30" width="1832" height="1458"><polygon points="392.0,682.0 435.5,707.5 414.0,682.0 435.5,656.5" fill="#ff0000" stroke="#ff0000" stroke-width="18" stroke-linejoin="round"/><line x1="596" y1="682" x2="403.0" y2="682.0" stroke="#ff0000" stroke-width="18" stroke-linecap="round"/><polygon points="940.0,612.5 969.7,653.3 960.2,621.3 990.1,606.5" fill="#ff0000" stroke="#ff0000" stroke-width="18" stroke-linejoin="round"/><line x1="1072" y1="670" x2="950.1" y2="616.9" stroke="#ff0000" stroke-width="18" stroke-linecap="round"/><polygon points="1334.5,446.0 1334.5,496.4 1345.6,465.0 1378.5,470.7" fill="#ff0000" stroke="#ff0000" stroke-width="18" stroke-linejoin="round"/><line x1="1440.5" y1="627" x2="1340.1" y2="455.5" stroke="#ff0000" stroke-width="18" stroke-linecap="round"/><polygon points="752.5,1314.5 802.4,1307.4 769.7,1300.8 770.7,1267.5" fill="#ff0000" stroke="#ff0000" stroke-width="18" stroke-linejoin="round"/><line x1="1005.8" y1="1113" x2="761.1" y2="1307.7" stroke="#ff0000" stroke-width="18" stroke-linecap="round"/></svg>
</body></html>
